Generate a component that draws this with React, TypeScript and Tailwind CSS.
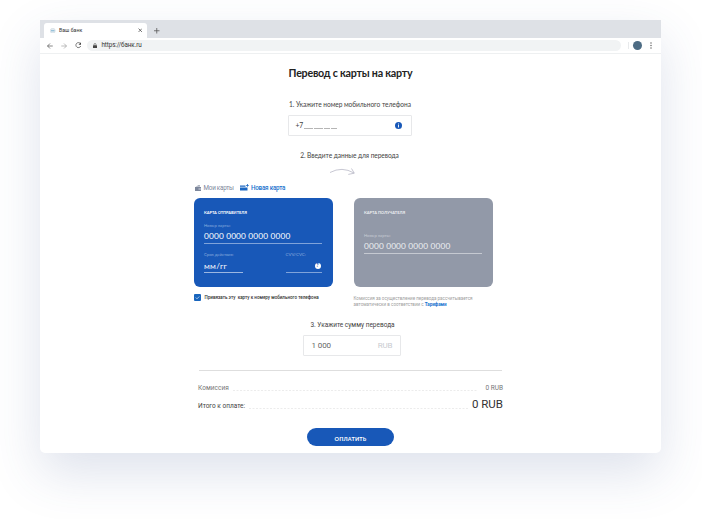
import React from 'react';

const lato = "font-['Lato','Noto_Sans',sans-serif]";

function BrowserBar() {
  return (
    <header className="text-[#333]">
      <div className="flex h-[18px] bg-[#dee1e6] pt-[3px] pl-1">
        <div className="flex h-[15px] w-[103px] items-center rounded-t-[3px] bg-white pr-[4px] pl-[6px]">
          <svg className="size-[5.5px]" viewBox="0 0 11 11">
            <circle cx="5.5" cy="5.5" r="5" fill="#e3ebf0" stroke="#cbd5dc" />
            <path d="M2 5.5h7" stroke="#7eb4d3" strokeWidth="2" />
          </svg>
          <span className="ml-[3.5px] text-[5.2px] leading-none tracking-[0.03px]">Ваш банк</span>
          <svg className="mr-[1px] ml-auto size-[4.5px]" viewBox="0 0 8 8" stroke="#444" strokeWidth="1.3">
            <path d="M1 1l6 6M7 1L1 7" />
          </svg>
        </div>
        <svg className="mt-[5px] ml-[7px] size-[5.5px]" viewBox="0 0 10 10" stroke="#555" strokeWidth="1.4">
          <path d="M5 0v10M0 5h10" />
        </svg>
      </div>
      <div className="flex h-[16px] items-center border-b border-[#eef0f1] bg-white pr-[9px] pl-[7px]">
        <svg className="size-[6px]" viewBox="0 0 12 12" fill="none" stroke="#444" strokeWidth="1.3">
          <path d="M11.5 6H1M6 1L1 6l5 5" />
        </svg>
        <svg className="ml-[8px] size-[6px]" viewBox="0 0 12 12" fill="none" stroke="#999" strokeWidth="1.3">
          <path d="M.5 6H11M6 1l5 5-5 5" />
        </svg>
        <svg className="ml-[7.5px] size-[6.5px]" viewBox="0 0 13 13" fill="none" stroke="#444" strokeWidth="1.4">
          <path d="M11 3.5A5 5 0 1 0 11.5 8" />
          <path d="M12 .5v5H7z" fill="#444" stroke="none" />
        </svg>
        <div className="ml-[6px] flex h-[11.5px] w-[534px] items-center rounded-full bg-[#f1f3f4] pl-[6px]">
          <svg className="h-[5.5px] w-[4px]" viewBox="0 0 8 11">
            <path d="M2 5V3a2 2 0 0 1 4 0v2" fill="none" stroke="#555" strokeWidth="1.3" />
            <rect y="4.5" width="8" height="6" rx="1" fill="#444" />
          </svg>
          <span className="ml-[4.5px] text-[6.3px] leading-none tracking-[-0.1px]">https://банк.ru</span>
        </div>
        <div className="ml-[6.5px] h-[7px] w-px bg-[#e8eaec]" />
        <div className="ml-[4.5px] size-[9px] rounded-full bg-[#4d6c84]" />
        <svg className="ml-auto h-[7px] w-[2px]" viewBox="0 0 2 7" fill="#666">
          <circle cx="1" cy="1" r=".75" />
          <circle cx="1" cy="3.5" r=".75" />
          <circle cx="1" cy="6" r=".75" />
        </svg>
      </div>
    </header>
  );
}

function SenderCard() {
  return (
    <section className={`${lato} h-[88.5px] w-[139px] rounded-[6px] bg-[#1858b8] px-[10.5px] pt-[11px] text-white`}>
      <h3 className="text-[3.95px] leading-[7px] font-bold">КАРТА ОТПРАВИТЕЛЯ</h3>
      <p className="mt-[7px] text-[4.15px] leading-[6px] text-[#8badde]">Номер карты:</p>
      <div className="mt-[1px] h-[13.5px] border-b border-[#7fa3da] text-[8.3px] leading-[13px] tracking-[0.16px]">0000 0000 0000 0000</div>
      <div className="mt-[8px] flex justify-between">
        <div className="w-[39px]">
          <p className="text-[4.2px] leading-[6px] whitespace-nowrap text-[#8badde]">Срок действия:</p>
          <div className="mt-[2px] h-[13.5px] border-b border-[#9bb7e2] text-[8.2px] leading-[13px] tracking-[0.3px]">мм/гг</div>
        </div>
        <div className="w-[36.5px]">
          <p className="text-[4.4px] leading-[6px] text-[#8badde]">CVV/CVC:</p>
          <div className="mt-[2px] flex h-[13.5px] justify-end border-b border-[#7fa3da] pt-[3px] pr-[1.5px]">
            <div className="flex size-[6px] items-center justify-center rounded-full bg-white text-[5px] leading-none font-black text-[#1858b8]">?</div>
          </div>
        </div>
      </div>
    </section>
  );
}

function RecipientCard() {
  return (
    <section className={`${lato} h-[88.5px] w-[139px] rounded-[6px] bg-[#9299a8] px-[10.5px] pt-[11px] text-white`}>
      <h3 className="text-[4px] leading-[7px] font-bold text-[#eceef1]">КАРТА ПОЛУЧАТЕЛЯ</h3>
      <p className="mt-[17px] text-[4.15px] leading-[6px] text-[#c9cdd5]">Номер карты:</p>
      <div className="mt-[1px] h-[13.5px] border-b border-[#c5c9d1] text-[8.3px] leading-[13px] tracking-[0.16px] text-[#eceef1]">0000 0000 0000 0000</div>
    </section>
  );
}

function Dots() {
  return (
    <svg className="mb-[2px] h-px min-w-0 flex-1" preserveAspectRatio="none">
      <line x1="0" x2="100%" y1=".5" y2=".5" stroke="#ececec" strokeDasharray="2 1.5" />
    </svg>
  );
}

export default function App() {
  return (
    <div className="h-[519px] w-[702px] overflow-hidden bg-white px-[40px] pt-[20px] font-['Roboto',sans-serif] text-[#444]">
      <main className="h-[433px] w-[621px] overflow-hidden rounded-b-[5px] bg-white shadow-[0_20px_50px_rgba(60,85,140,0.17)]">
        <BrowserBar />
        <div className="flex flex-col items-center">
          <h1 className={`${lato} mt-[11px] text-[10.7px] leading-[16px] font-bold tracking-[-0.23px] whitespace-nowrap text-[#222]`}>Перевод с карты на карту</h1>
          <h2 className={`${lato} mt-[17.5px] ml-[-1px] h-[10px] text-[6.6px] leading-[10px] tracking-[-0.05px]`}>1. Укажите номер мобильного телефона</h2>
          <div className="mt-[6.5px] ml-[-2px] flex h-[21px] w-[124px] items-center rounded-[1px] border border-[#e7e8ea] pr-[9px] pl-[7px]">
            <span className={`${lato} text-[6.8px] leading-none tracking-[-0.2px]`}>+7</span>
            <span className="mt-[5px] ml-[1.5px] flex gap-[1.5px]">
              <i className="h-px w-[8.5px] bg-[#b5b5b5]" />
              <i className="h-px w-[8.5px] bg-[#b5b5b5]" />
              <i className="h-px w-[5.5px] bg-[#b5b5b5]" />
              <i className="h-px w-[5.5px] bg-[#b5b5b5]" />
            </span>
            <svg className="ml-auto size-[7px]" viewBox="0 0 14 14">
              <circle cx="7" cy="7" r="7" fill="#1858b8" />
              <path d="M7 3v2M7 6v5" stroke="#fff" strokeWidth="1.8" />
            </svg>
          </div>
          <h2 className={`${lato} mt-[14px] ml-[-2px] h-[10px] text-[6.6px] leading-[10px] tracking-[-0.06px]`}>2. Введите данные для перевода</h2>
          <svg className="mt-[8px] ml-[-17px] h-[9px] w-[27px]" viewBox="0 0 27 9" fill="none" stroke="#b9b9c6" strokeWidth=".8">
            <path d="M1 4.5Q13-2 25 5M22.5 .5l2.8 4.7-6 1.2" />
          </svg>
          <div className="w-[314px]">
            <nav className="mt-[6px] flex h-[10px] items-center pl-[1.5px] text-[6.3px] leading-none whitespace-nowrap">
              <svg className="h-[6px] w-[6px] shrink-0" viewBox="0 0 12 12" fill="#7d879c">
                <path d="M1 3L9 0l1 3z" />
                <path d="M0 4h12v8H0z" />
                <path d="M7 7h5v2H7z" fill="#d5d9e2" />
              </svg>
              <span className="ml-[2.5px] w-[36.5px] shrink-0 tracking-[-0.23px] text-[#7d879c]">Мои карты</span>
              <svg className="mb-[1px] h-[7px] w-[9px] shrink-0" viewBox="0 0 18 14" fill="#1b67c2">
                <path d="M0 3h11v2.5H0zM0 7h15v6H0zM14 0h1.6v2h2v1.6h-2v2H14v-2h-2V2h2z" />
              </svg>
              <span className="ml-[2px] font-medium tracking-[-0.23px] text-[#1b74ce]">Новая карта</span>
            </nav>
            <div className="mt-[5px] flex">
              <div className="w-[160px]">
                <SenderCard />
                <label className="mt-[7px] flex h-[7px] items-center">
                  <span className="flex size-[7px] items-center justify-center rounded-[1px] bg-[#1865bd]">
                    <svg className="size-[5px]" viewBox="0 0 10 10" fill="none" stroke="#fff" strokeWidth="1.3">
                      <path d="M1.5 5l2.5 2.5L8.5 3" />
                    </svg>
                  </span>
                  <span className="mt-[2px] ml-[4px] text-[4.55px] leading-none font-medium whitespace-pre text-[#333]">Привязать эту  карту к номеру мобильного телефона</span>
                </label>
              </div>
              <div className="w-[140px]">
                <RecipientCard />
                <p className="mt-[9.5px] text-[4.55px] leading-[5.7px] whitespace-nowrap text-[#a0a0a0]">
                  Комиссия за осуществление перевода рассчитывается
                  <br />
                  автоматически в соответствии с <a className="font-bold text-[#1b74ce]">Тарифами</a>
                </p>
              </div>
            </div>
          </div>
          <h2 className="mt-[12.5px] ml-[4px] h-[10px] text-[6.5px] leading-[10px]">3. Укажите сумму перевода</h2>
          <div className="mt-[5.5px] ml-[3px] flex h-[21px] w-[98px] items-center justify-between rounded-[1px] border border-[#e7e8ea] px-[7.5px] pt-px text-[8px] leading-none tracking-[-0.1px]">
            <span className="text-[#666]">1 000</span>
            <span className="text-[#c9cbd0]">RUB</span>
          </div>
          <div className="mt-[13.5px] w-[303px] border-t border-[#dedede]" />
          <div className="mt-[11px] flex h-[11px] w-[305px] items-end gap-[4px] text-[6.5px] leading-[10px] text-[#777]">
            <span className="tracking-[0.05px]">Комиссия</span>
            <Dots />
            <span className="ml-[3px]">0 RUB</span>
          </div>
          <div className="mt-[7px] flex h-[11px] w-[305px] items-end gap-[4px] text-[6.5px] leading-[10px]">
            <span>Итого к оплате:</span>
            <Dots />
            <span className="text-[11.5px] leading-[13px] text-[#333]">0 RUB</span>
          </div>
          <button className={`${lato} mt-[17px] h-[18.5px] w-[87px] rounded-full bg-[#1858b8] pt-[3px] text-[5.5px] font-bold tracking-[0.2px] text-white`}>ОПЛАТИТЬ</button>
        </div>
      </main>
    </div>
  );
}
